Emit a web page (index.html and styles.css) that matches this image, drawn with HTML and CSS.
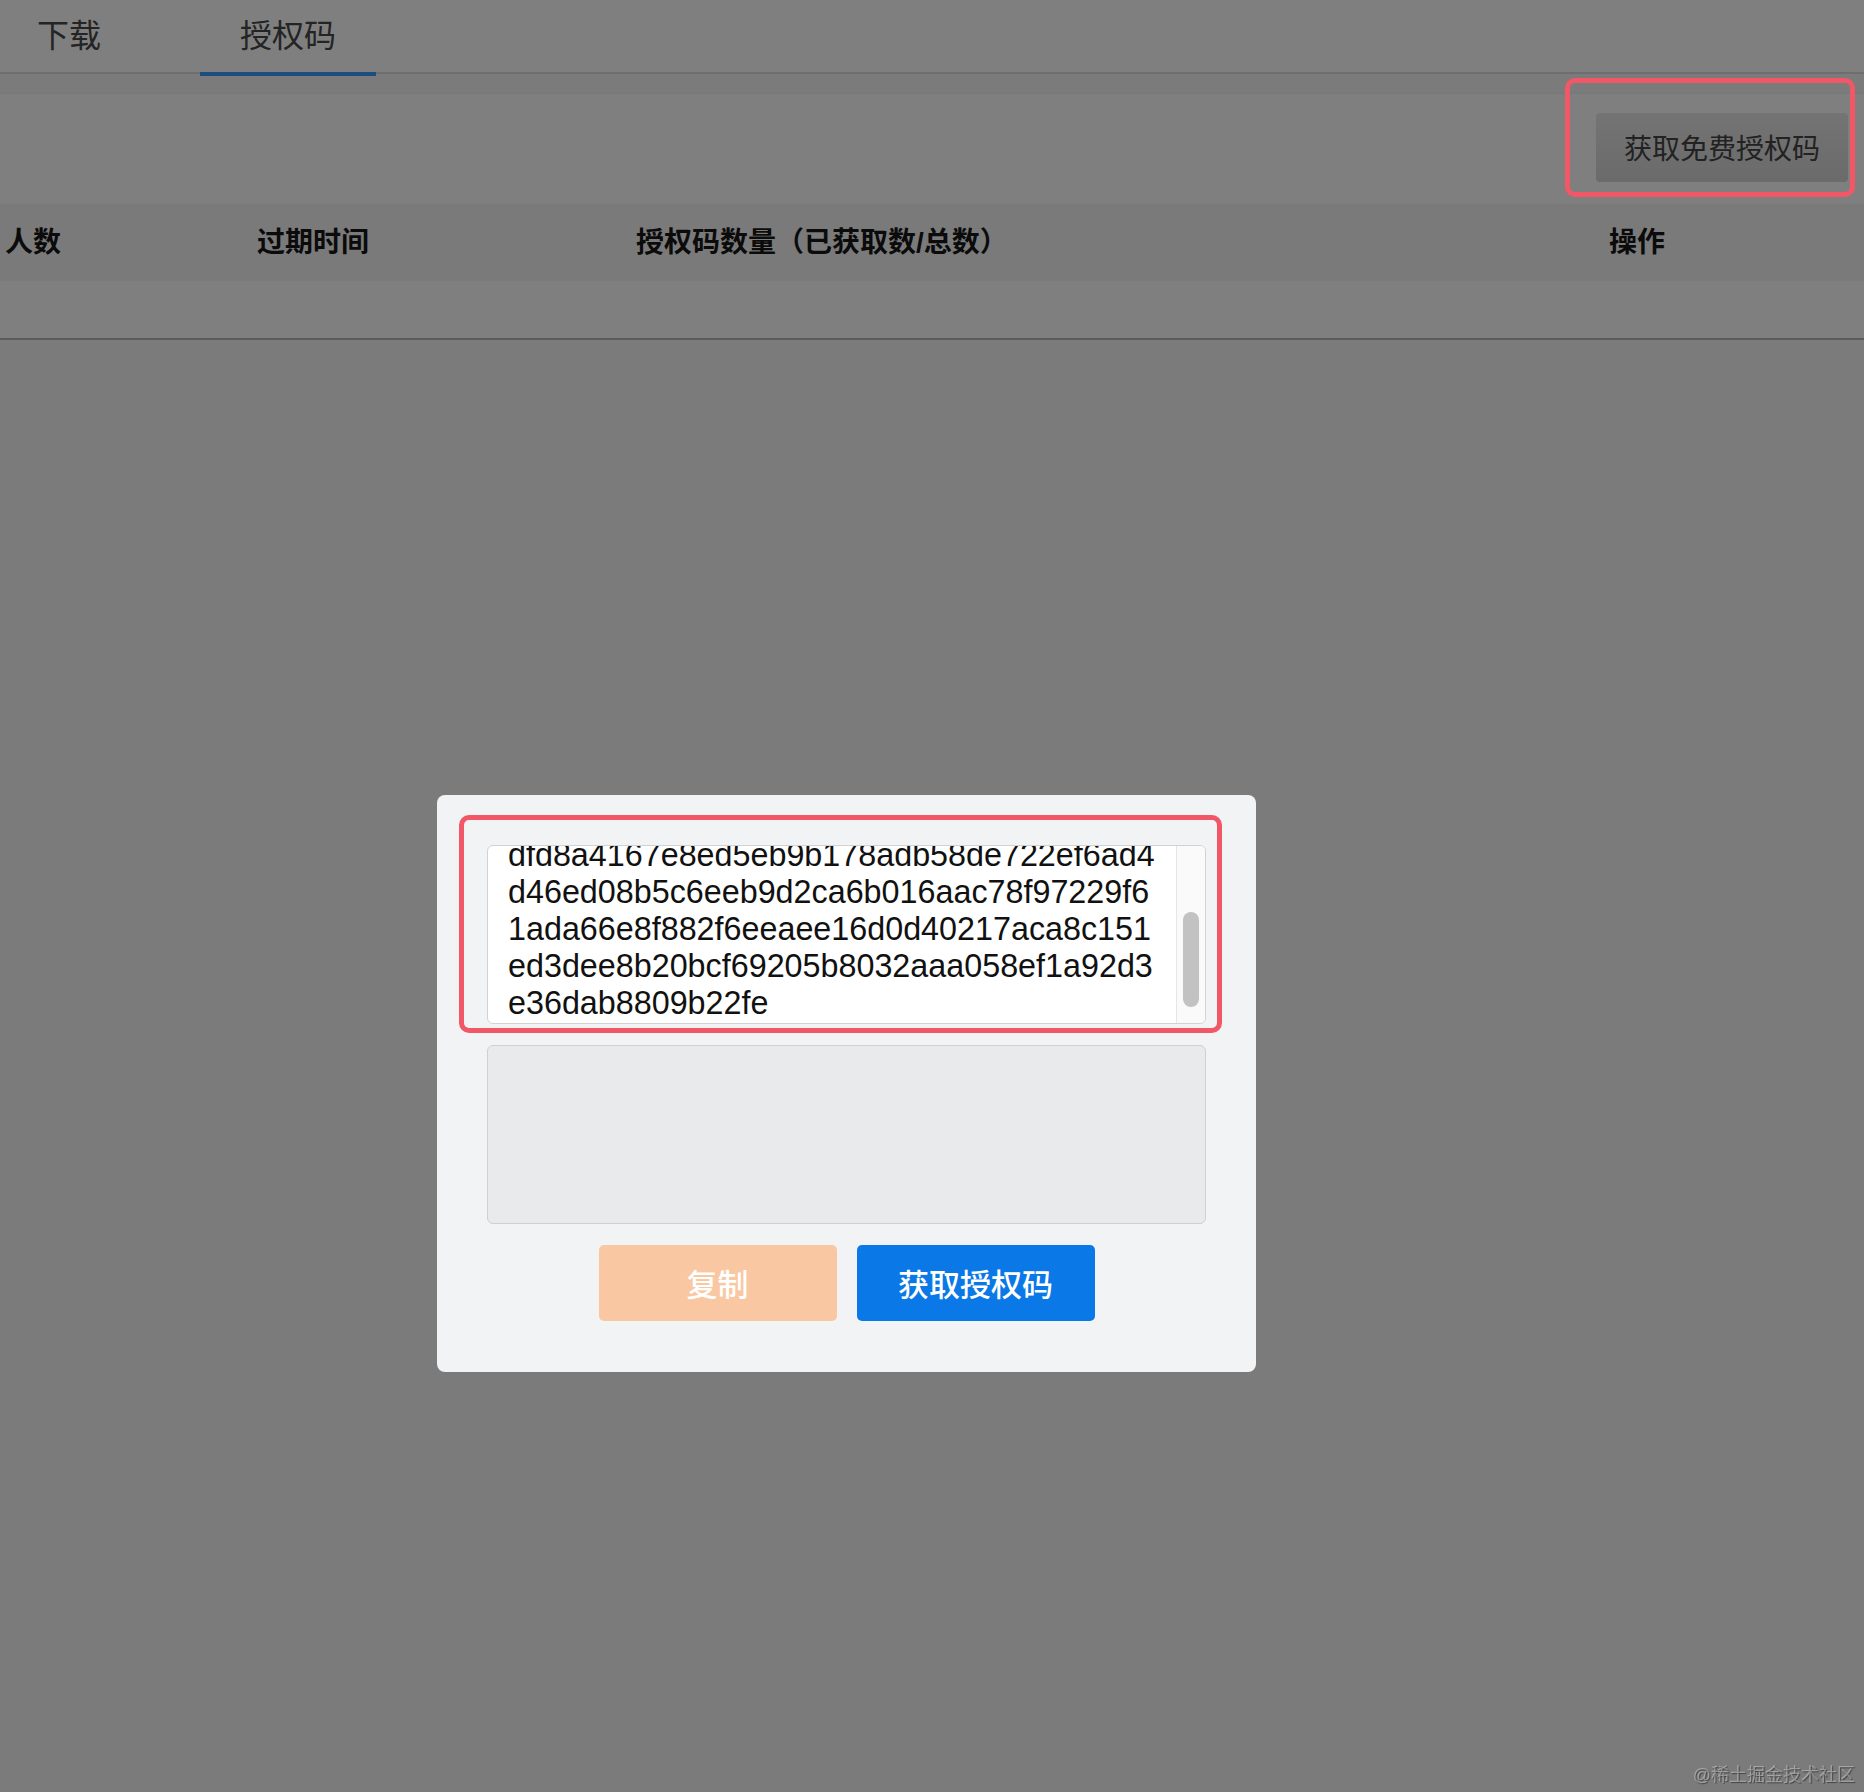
FILE: index.html
```html
<!DOCTYPE html>
<html lang="zh-CN">
  <head>
    <meta charset="UTF-8" />
    <meta name="viewport" content="width=device-width, initial-scale=1.0" />
    <title>授权码</title>
    <link rel="stylesheet" href="styles.css">
  </head>
  <body>
    <div class="tabs">
      <div class="tab">下载</div>
      <div class="tab active">授权码</div>
    </div>

    <div class="panel">
      <div class="toolbar">
        <div class="mark-wrap">
          <button class="free-button">获取免费授权码</button>
        </div>
      </div>
      <div class="table-head">
        <div>人数</div>
        <div>过期时间</div>
        <div>授权码数量（已获取数/总数）</div>
        <div>操作</div>
      </div>
      <div class="table-body"></div>
    </div>

    <div class="mask">
      <div class="dialog">
        <div class="mark"></div>
        <div class="code-field">
          <textarea class="code-input" id="code" readonly>
7c2f0e9a41b3d85f6e0a29c4b7d1e3f58a06b
b94e1f7d2c08a6f3e5d19b0c74a2f8e6d3150
dfd8a4167e8ed5eb9b178adb58de722ef6ad4
d46ed08b5c6eeb9d2ca6b016aac78f97229f6
1ada66e8f882f6eeaee16d0d40217aca8c151
ed3dee8b20bcf69205b8032aaa058ef1a92d3
e36dab8809b22fe</textarea>
          <div class="scroll-track"><div class="scroll-thumb"></div></div>
        </div>
        <textarea class="code-box" disabled></textarea>
        <div class="actions">
          <button class="copy-button" disabled>复制</button>
          <button class="get-button">获取授权码</button>
        </div>
      </div>
    </div>

    <div class="watermark">@稀土掘金技术社区</div>

    <script src="script.js"></script>
  </body>
</html>
```

FILE: styles.css
```css
* {
  box-sizing: border-box;
}
body {
  margin: 0;
  background-color: #f6f6f6;
  font-family: "Liberation Sans", "Noto Sans CJK SC", sans-serif;
}
.tabs {
  display: flex;
  gap: 59px;
  height: 74px;
  background-color: #fff;
  border-bottom: 2px solid #dcdcdc;
}
.tab {
  position: relative;
  padding: 0 40px;
  line-height: 72px;
  font-size: 32px;
  color: #484848;
}
.tab:first-child {
  padding-left: 37px;
}
.tab.active::after {
  content: "";
  position: absolute;
  left: 0;
  right: 0;
  bottom: -4px;
  height: 4px;
  background-color: #3c9cff;
}
.panel {
  margin-top: 20px;
  background-color: #fff;
  border-bottom: 2px solid #b6b6b6;
  box-shadow: 0 3px 5px rgba(0, 0, 0, 0.25);
}
.toolbar {
  display: flex;
  justify-content: flex-end;
  padding: 19px 16px 22px;
}
.mark-wrap {
  position: relative;
}
.mark-wrap::after {
  content: "";
  position: absolute;
  top: -35px;
  left: -31px;
  right: -7px;
  bottom: -15px;
  border: 5px solid #f25767;
  border-radius: 10px;
  z-index: 20;
}
.free-button {
  display: block;
  height: 69px;
  padding: 0 28px 2px;
  border: none;
  border-radius: 4px;
  background: linear-gradient(#e8e8e8, #d6d6d6);
  color: #444;
  font-family: inherit;
  font-size: 28px;
}
.table-head {
  display: grid;
  grid-template-columns: 252px 379px 973px 1fr;
  align-items: center;
  height: 77px;
  padding: 0 0 5px 5px;
  background-color: #f5f5f5;
  font-size: 28px;
  font-weight: 700;
  color: #161616;
}
.table-body {
  height: 57px;
}
.mask {
  position: fixed;
  inset: 0;
  z-index: 10;
  display: flex;
  align-items: flex-start;
  padding: 795px 0 0 437px;
  background-color: rgba(0, 0, 0, 0.5);
}
.dialog {
  position: relative;
  display: flex;
  flex-direction: column;
  gap: 21px;
  width: 819px;
  padding: 50px 50px 51px;
  border-radius: 8px;
  background-color: #f2f3f5;
}
.mark {
  position: absolute;
  top: 20px;
  left: 22px;
  width: 763px;
  height: 218px;
  border: 5px solid #f25767;
  border-radius: 10px;
  pointer-events: none;
}
.code-field {
  display: flex;
  height: 179px;
  border: 1px solid #d2d2d2;
  border-radius: 6px;
  background-color: #fff;
  overflow: hidden;
}
.code-input {
  flex: 1;
  margin: 0;
  padding: 4px 4px 1px 20px;
  border: none;
  background: transparent;
  color: #111;
  font-family: "Liberation Sans", sans-serif;
  font-size: 32.3px;
  line-height: normal;
  resize: none;
  outline: none;
  scrollbar-width: none;
}
.scroll-track {
  display: flex;
  flex-direction: column;
  justify-content: flex-end;
  width: 29px;
  padding: 0 6px 16px;
  border-left: 1px solid #e6e6e6;
  background-color: #fafafa;
}
.scroll-thumb {
  height: 95px;
  border-radius: 8px;
  background-color: #c2c2c2;
}
.code-box {
  display: block;
  width: 100%;
  height: 179px;
  margin: 0;
  border: 1px solid #cfd0d1;
  border-radius: 6px;
  background-color: #e9eaeb;
  resize: none;
}
.actions {
  display: flex;
  justify-content: center;
  gap: 20px;
}
.actions button {
  width: 238px;
  height: 76px;
  padding-bottom: 3px;
  border: none;
  border-radius: 5px;
  color: #fff;
  font-family: inherit;
  font-size: 31px;
  font-weight: 500;
}
.copy-button {
  background-color: #f9c8a2;
}
.get-button {
  background-color: #0a78e6;
}
.watermark {
  position: fixed;
  right: 9px;
  bottom: 6px;
  z-index: 30;
  font-size: 18px;
  color: rgba(255, 255, 255, 0.35);
  text-shadow: 1px 1px 1px rgba(0, 0, 0, 0.45);
}
```

FILE: script.js
```js
const code = document.getElementById("code");
code.scrollTop = code.scrollHeight;
```
